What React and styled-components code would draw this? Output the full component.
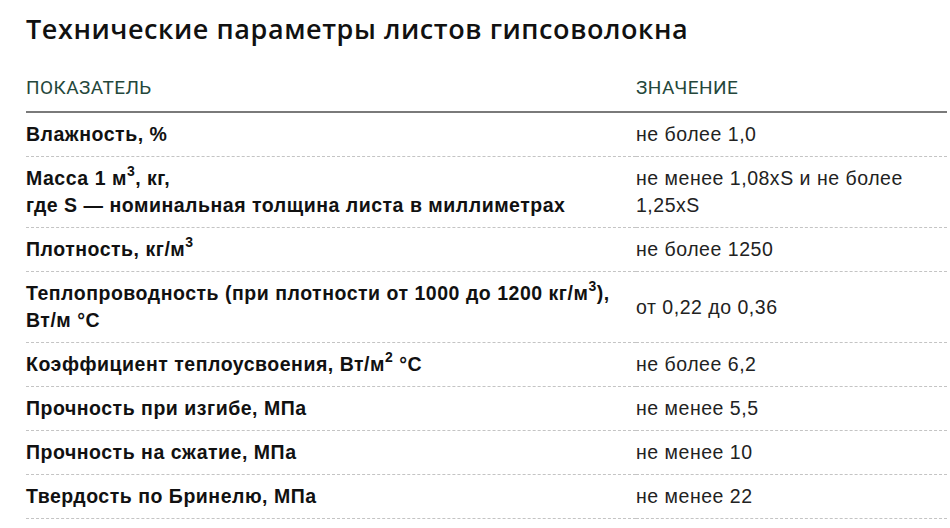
import React from 'react';
import styled, { createGlobalStyle } from 'styled-components';

const GlobalStyle = createGlobalStyle`
  body {
    margin: 0;
    background: #fff;
    font-family: "Liberation Sans", Arial, sans-serif;
  }
`;

const Wrapper = styled.div`
  padding: 12px 3px 0 26px;
`;

const Title = styled.h1`
  margin: 0;
  font-family: "Open Sans", sans-serif;
  font-weight: 600;
  font-size: 27px;
  line-height: 34px;
  color: #111;
  letter-spacing: 0.57px;
`;

const Table = styled.table`
  width: 100%;
  margin-top: 30px;
  border-collapse: collapse;
  table-layout: fixed;
`;

const HeadCell = styled.th`
  text-align: left;
  font-family: Roboto, sans-serif;
  font-weight: 400;
  font-size: 19px;
  letter-spacing: 0.45px;
  color: #24473b;
  padding: 0 0 12px;
  border-bottom: 2px solid #7a7a7a;
  width: ${p => p.$width || 'auto'};
`;

const Row = styled.tr`
  border-bottom: 1px dashed #c4c4c4;
`;

const Cell = styled.td`
  padding: 8px ${p => (p.$bold ? '0' : '20px')} 8px 0;
  font-size: 19.5px;
  letter-spacing: 0.52px;
  line-height: 27px;
  vertical-align: middle;
  font-weight: ${p => (p.$bold ? 700 : 400)};
  color: ${p => (p.$bold ? '#111' : '#222')};
`;

const Sup = styled.sup`
  font-size: 14px;
  line-height: 0;
  vertical-align: 9px;
`;

const rows = [
  { name: <>Влажность, %</>, value: 'не более 1,0' },
  {
    name: (
      <>
        Масса 1 м<Sup>3</Sup>, кг,
        <br />
        где S — номинальная толщина листа в миллиметрах
      </>
    ),
    value: 'не менее 1,08xS и не более 1,25xS',
  },
  { name: <>Плотность, кг/м<Sup>3</Sup></>, value: 'не более 1250' },
  {
    name: (
      <>
        Теплопроводность (при плотности от 1000 до 1200 кг/м<Sup>3</Sup>),
        <br />
        Вт/м °С
      </>
    ),
    value: 'от 0,22 до 0,36',
  },
  { name: <>Коэффициент теплоусвоения, Вт/м<Sup>2</Sup> °С</>, value: 'не более 6,2' },
  { name: <>Прочность при изгибе, МПа</>, value: 'не менее 5,5' },
  { name: <>Прочность на сжатие, МПа</>, value: 'не менее 10' },
  { name: <>Твердость по Бринелю, МПа</>, value: 'не менее 22' },
];

export default function App() {
  return (
    <Wrapper>
      <GlobalStyle />
      <Title>Технические параметры листов гипсоволокна</Title>
      <Table>
        <thead>
          <tr>
            <HeadCell $width="610px">ПОКАЗАТЕЛЬ</HeadCell>
            <HeadCell>ЗНАЧЕНИЕ</HeadCell>
          </tr>
        </thead>
        <tbody>
          {rows.map((r, i) => (
            <Row key={`row-${i}`}>
              <Cell $bold>{r.name}</Cell>
              <Cell>{r.value}</Cell>
            </Row>
          ))}
        </tbody>
      </Table>
    </Wrapper>
  );
}
